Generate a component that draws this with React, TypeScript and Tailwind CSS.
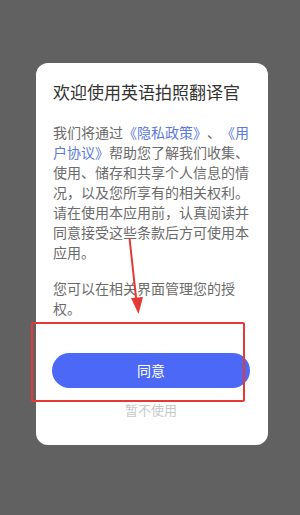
import React from "react";

const font = { fontFamily: '"Noto Sans CJK SC", "Noto Sans", sans-serif' };

export default function App() {
  const L = "text-[#5b7ad9]";
  return (
    <div className="relative h-[515px] w-[300px] bg-[#616161] pt-[63px] pl-[36px] [text-spacing-trim:space-all]" style={font}>
      <div className="flex h-[382px] w-[232px] flex-col rounded-[12px] bg-white pl-[17px] pt-[17px]">
        <div className="whitespace-nowrap text-[17px] leading-[24px] text-[#333333]">欢迎使用英语拍照翻译官</div>
        <div className="mt-[18px] whitespace-nowrap text-[14px] leading-[20px] text-[#6b6b6b]">
          <div>
            我们将通过<span className={L}>《隐私政策》</span>、<span className={L}>《用</span>
          </div>
          <div>
            <span className={L}>户协议》</span>帮助您了解我们收集、
          </div>
          <div>使用、储存和共享个人信息的情</div>
          <div>况，以及您所享有的相关权利。</div>
          <div>请在使用本应用前，认真阅读并</div>
          <div>同意接受这些条款后方可使用本</div>
          <div>应用。</div>
        </div>
        <div className="mt-[16px] whitespace-nowrap text-[14px] leading-[20px] text-[#6b6b6b]">
          <div>您可以在相关界面管理您的授</div>
          <div>权。</div>
        </div>
        <button className="mt-[35px] ml-[-1px] flex h-[35px] w-[198px] items-center justify-center rounded-full bg-[#4b69f6] text-[14px] text-white">
          同意
        </button>
        <div className="mt-[13px] ml-[-1px] w-[198px] text-center text-[13px] leading-[18px] text-[#c8c8c8]">暂不使用</div>
      </div>

      <div className="pointer-events-none absolute left-[31px] top-[322px] h-[80px] w-[214px] rounded-[2px] border-2 border-[#e53935]" />
      <svg className="pointer-events-none absolute left-0 top-0" width="300" height="515" viewBox="0 0 300 515">
        <line x1="129.5" y1="238" x2="136.5" y2="302" stroke="#e53935" strokeWidth="2" />
        <polygon points="131,298 143,297 138.5,314" fill="#e53935" />
      </svg>
    </div>
  );
}
